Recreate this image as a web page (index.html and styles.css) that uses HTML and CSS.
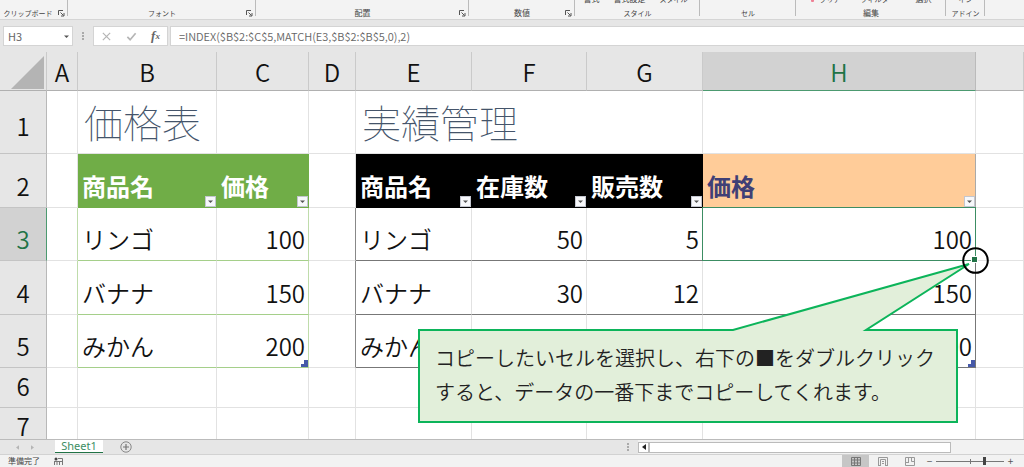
FILE: index.html
```html
<!DOCTYPE html>
<html lang="ja">
<head>
<meta charset="utf-8">
<meta name="viewport" content="width=device-width, initial-scale=1">
<title>Sheet1</title>
<link rel="stylesheet" href="styles.css">
</head>
<body>
<svg class="defs" aria-hidden="true">
  <symbol id="launch" viewBox="0 0 7 7"><path d="M.5 5V.5H5M2.5 2.5l3 3M6 3v3H3" fill="none" stroke="#555"/></symbol>
  <symbol id="down" viewBox="0 0 11 11"><path d="M3 4.500h5L5.500 7z" fill="#555"/></symbol>
</svg>

<header class="ribbon">
  <section class="group clipboard"><div class="label small">クリップボード</div><svg class="launch"><use href="#launch"/></svg></section>
  <section class="group font"><div class="label small">フォント</div><svg class="launch"><use href="#launch"/></svg></section>
  <section class="group align"><div class="label">配置</div><svg class="launch"><use href="#launch"/></svg></section>
  <section class="group number"><div class="label">数値</div><svg class="launch"><use href="#launch"/></svg></section>
  <section class="group style"><div class="commands"><span>書式</span><span>書式設定</span><span class="small">スタイル</span></div><div class="label small">スタイル</div></section>
  <section class="group cells"><div class="label small">セル</div></section>
  <section class="group edit"><div class="commands"><span class="clear small"><i></i>クリア</span><span class="small">フィルター</span><span>選択</span></div><div class="label">編集</div></section>
  <section class="group addin"><div class="commands"><span class="small">イン</span></div><div class="label small">アドイン</div></section>
</header>

<div class="formula-bar">
  <div class="name-box">
    <input class="name" aria-label="名前ボックス" value="H3">
    <svg class="name-arrow"><use href="#down"/></svg>
  </div>
  <span class="grip"></span>
  <div class="actions">
    <button aria-label="キャンセル"><svg viewBox="0 0 12 12"><path d="M2 2l8 8M10 2l-8 8" stroke="#b5b5b5" stroke-width="1.300"/></svg></button>
    <button aria-label="入力"><svg viewBox="0 0 12 12"><path d="M1.500 6.500l3 3 6-7" fill="none" stroke="#b5b5b5" stroke-width="1.800"/></svg></button>
    <button class="fx" aria-label="関数の挿入"><i>f</i><i class="sub">x</i></button>
  </div>
  <input class="formula" aria-label="数式" value="=INDEX($B$2:$C$5,MATCH(E3,$B$2:$B$5,0),2)">
</div>

<main class="sheet">
  <table class="grid">
    <colgroup><col class="c-row"><col class="c-a"><col class="c-b"><col class="c-c"><col class="c-d"><col class="c-e"><col class="c-f"><col class="c-g"><col class="c-h"><col></colgroup>
    <thead>
      <tr class="letters"><th class="corner"><svg viewBox="0 0 33 33"><path d="M33 0v33H0z" fill="#b4b4b4"/></svg></th><th>A</th><th>B</th><th>C</th><th>D</th><th>E</th><th>F</th><th>G</th><th class="active">H</th><th></th></tr>
    </thead>
    <tbody>
      <tr class="r1"><th>1</th><td></td><td class="title">価格表</td><td></td><td></td><td class="title" colspan="3">実績管理</td><td></td><td></td></tr>
      <tr class="r2"><th>2</th><td></td>
        <td class="head green">商品名<button class="filter" aria-label="商品名の絞り込み"><svg><use href="#down"/></svg></button></td>
        <td class="head green">価格<button class="filter" aria-label="価格の絞り込み"><svg><use href="#down"/></svg></button></td>
        <td></td>
        <td class="head black">商品名<button class="filter" aria-label="商品名の絞り込み"><svg><use href="#down"/></svg></button></td>
        <td class="head black">在庫数<button class="filter" aria-label="在庫数の絞り込み"><svg><use href="#down"/></svg></button></td>
        <td class="head black">販売数<button class="filter" aria-label="販売数の絞り込み"><svg><use href="#down"/></svg></button></td>
        <td class="head orange">価格<button class="filter" aria-label="価格の絞り込み"><svg><use href="#down"/></svg></button></td>
        <td></td></tr>
      <tr class="r3"><th class="active">3</th><td class="gl"></td><td class="g">リンゴ</td><td class="g num ge">100</td><td class="kl"></td><td class="k">リンゴ</td><td class="k num">50</td><td class="k num">5</td><td class="k num ke">100<span class="selection"></span></td><td></td></tr>
      <tr class="r4"><th>4</th><td class="gl"></td><td class="g">バナナ</td><td class="g num ge">150</td><td class="kl"></td><td class="k">バナナ</td><td class="k num">30</td><td class="k num">12</td><td class="k num ke">150</td><td></td></tr>
      <tr class="r5"><th>5</th><td class="gl"></td><td class="g">みかん</td><td class="g num ge">200<svg class="resize" viewBox="0 0 7 7"><path d="M3 0h4v7H0V4h3z"/></svg></td><td class="kl"></td><td class="k">みかん</td><td class="k num"></td><td class="k num"></td><td class="k num ke">200<svg class="resize" viewBox="0 0 7 7"><path d="M3 0h4v7H0V4h3z"/></svg></td><td></td></tr>
      <tr class="r6"><th>6</th><td></td><td></td><td></td><td></td><td></td><td></td><td></td><td></td><td></td></tr>
      <tr class="r6"><th>7</th><td></td><td></td><td></td><td></td><td></td><td></td><td></td><td></td><td></td></tr>
    </tbody>
  </table>
  <div class="callout">コピーしたいセルを選択し、右下の■をダブルクリック<br>すると、データの一番下までコピーしてくれます。</div>
  <svg class="pointer" viewBox="0 0 1000 387" aria-hidden="true">
    <path d="M733 280V278L969 212L866 278V280z" fill="#e2efda"/>
    <path d="M729 278H733L969 212L866 278H870" fill="none" stroke="#0cb45a" stroke-width="2"/>
    <circle cx="975.500" cy="208.500" r="12.300" fill="none" stroke="#000" stroke-width="2"/>
  </svg>
</main>

<nav class="tabs">
  <button class="nav-arrow" aria-label="前のシート"><svg viewBox="0 0 4 6"><path d="M4 0v6L0 3z"/></svg></button>
  <button class="nav-arrow" aria-label="次のシート"><svg viewBox="0 0 4 6"><path d="M0 0v6l4-3z"/></svg></button>
  <button class="tab">Sheet1</button>
  <button class="add" aria-label="新しいシート"><svg viewBox="0 0 12 12"><circle cx="6" cy="6" r="5.200" fill="none" stroke="#888"/><path d="M6 3v6M3 6h6" stroke="#777" stroke-width="1.200"/></svg></button>
  <span class="grip tab-grip"></span>
  <div class="scroll"><button class="scroll-left" aria-label="左へ"><svg viewBox="0 0 4 6"><path d="M4 0v6L0 3z"/></svg></button><span class="thumb"></span></div>
</nav>

<footer class="status">
  <span>準備完了</span>
  <svg class="macro" viewBox="0 0 9 8"><path d="M4 1.500h4.500V8M.5 4v4M3 4v4M5.500 4v4M1 4.500h7" stroke="#777" fill="none"/><circle cx="2" cy="2" r="1.500" fill="#444"/></svg>
  <div class="views">
    <button class="on" aria-label="標準"><svg viewBox="0 0 10 9"><path d="M.5.5h9v8h-9zM.5 3h9M.5 6h9M3.500.5v8M6.500.5v8" fill="none" stroke="#777"/></svg></button>
    <button aria-label="ページレイアウト"><svg viewBox="0 0 10 9"><path d="M.5 8.500V.5h9v8M2.500 8.500v-6h5v6M4 4.500h2M4 6.500h2M0 8.500h3M7 8.500h3" fill="none" stroke="#999"/></svg></button>
    <button aria-label="改ページプレビュー"><svg viewBox="0 0 10 9"><path d="M.5.5h9v8h-9zM.5 5.500H4M3.500.5v5M6.500.5v4h3" fill="none" stroke="#999"/></svg></button>
  </div>
  <div class="zoom">
    <button aria-label="縮小">−</button>
    <input type="range" min="0" max="100" value="73" aria-label="ズーム">
    <button aria-label="拡大">+</button>
  </div>
</footer>
</body>
</html>
```
FILE: styles.css
```css
* { box-sizing: border-box; }
body {
  margin: 0;
  height: 100vh;
  display: flex;
  flex-direction: column;
  overflow: hidden;
  background: #fff;
  color: #222;
  font-family: "Noto Sans CJK JP", sans-serif;
}
button, input { font: inherit; color: inherit; margin: 0; padding: 0; border: 0; background: none; border-radius: 0; }
button { display: flex; align-items: center; justify-content: center; }
svg { display: block; }
.defs { position: absolute; width: 0; height: 0; }

/* ribbon */
.ribbon { flex: none; display: flex; height: 20px; background: #f3f3f3; border-bottom: 1px solid #d5d5d5; font-size: 8px; line-height: 10px; color: #444; }
.group { flex: none; display: flex; flex-direction: column; justify-content: flex-end; position: relative; padding-bottom: 1px; overflow: hidden; }
.group::after { content: ""; position: absolute; right: 0; top: 0; height: 16px; border-right: 1px solid #bbb; }
.label { text-align: center; }
.small { font-size: 7px; }
.launch { position: absolute; right: 3px; bottom: 2px; width: 7px; height: 7px; }
.clipboard { width: 68px; }
.clipboard .label { padding-right: 12px; }
.font { width: 188px; }
.align { width: 213px; }
.number { width: 106px; }
.style { width: 125px; }
.cells { width: 96px; }
.edit { width: 150px; }
.addin { width: 39px; }
.commands { flex: 1; display: flex; align-items: flex-end; justify-content: center; gap: 14px; height: 4px; min-height: 0; overflow: hidden; margin-bottom: 4px; white-space: nowrap; }
.style .commands { padding-right: 4px; }
.edit .commands { gap: 20px; }
.clear i { display: inline-block; width: 3px; height: 3px; margin-right: 6px; background: #ee8095; border-radius: 1px; }

/* formula bar */
.formula-bar { flex: none; display: flex; align-items: center; height: 32px; padding: 0 0 0 3px; background: #e6e6e6; font-size: 11px; color: #666; }
.name-box { display: flex; align-items: center; width: 70px; height: 20px; padding-left: 4px; background: #fff; border: 1px solid #d4d4d4; }
.name { flex: 1; min-width: 0; height: 18px; }
.name-arrow { width: 11px; height: 11px; }
.grip { width: 2px; height: 8px; margin: 0 9px; background: repeating-linear-gradient(#aaa 0 2px, transparent 2px 3px); }
.actions { display: flex; justify-content: space-around; align-items: center; width: 75px; height: 20px; background: #fff; border: 1px solid #d4d4d4; }
.actions svg { width: 11px; height: 11px; }
.fx { font: bold 13px/16px "Liberation Serif", serif; }
.fx .sub { font-size: 9px; }
.formula { flex: 1; min-width: 0; height: 20px; margin-left: 2px; padding-left: 8px; background: #fff; border: 1px solid #d4d4d4; border-right: 0; font-weight: 350; }

/* sheet */
.sheet { flex: 1; min-height: 0; position: relative; overflow: hidden; }
.grid { width: 100%; table-layout: fixed; border-collapse: separate; border-spacing: 0; font-size: 24px; line-height: 36px; font-weight: 350; color: #111; }
.c-row { width: 47px; }
.c-a { width: 31px; }
.c-b { width: 139px; }
.c-c { width: 92px; }
.c-d { width: 47px; }
.c-e { width: 116px; }
.c-f { width: 115px; }
.c-g { width: 116px; }
.c-h { width: 273px; }
.grid th, .grid td { position: relative; padding: 0 4px 3px; vertical-align: bottom; white-space: nowrap; border-right: 1px solid #e2e2e2; border-bottom: 1px solid #e2e2e2; text-align: left; }
.grid th { padding: 0 0 3px; background: #e6e6e6; font-weight: 350; text-align: center; border-right-color: #b8b8b8; border-bottom-color: #c4c4c4; }
.grid .letters th { height: 39px; padding: 0; border-right-color: #cacaca; border-bottom-color: #b0b0b0; }
.letters svg { width: 33px; height: 33px; margin: 0 0 1px 11px; }
.grid th.active { background: #d2d2d2; color: #217346; border-right-color: #4c9a70; }
.grid .letters th.active { border-right-color: #bbb; border-bottom-color: #4c9a70; }
.r1 { height: 63px; }
.grid .r1 th { padding-bottom: 9px; }
.grid .title { padding: 0 6px 4px; font-size: 39px; line-height: 56px; font-weight: 100; color: #44546a; }
.r2 { height: 54px; }
.r3 { height: 53px; }
.r4 { height: 54px; }
.r5 { height: 53px; }
.r6 { height: 40px; }
.grid .head { font-weight: 700; color: #fff; }
.grid .green { background: #70ad47; border-color: #70ad47; }
.grid .black { background: #000; border-color: #000; }
.grid .orange { background: #ffcc99; border-right-color: #aaa; color: #3f3f76; }
.filter { position: absolute; right: 0; bottom: 0; width: 11px; height: 11px; background: #f7f8fb; border: 1px solid #c3c6cf; }
.filter svg { flex: none; width: 11px; height: 11px; }
.grid .num { text-align: right; padding-right: 3px; }
.grid .gl, .grid .ge { border-right-color: #bfdcab; }
.grid .g { border-bottom-color: #a5cf8a; }
.grid .kl { border-right-color: #888; }
.grid .k { border-bottom-color: #777; }
.grid .ke { border-right-color: #777; }
.selection { position: absolute; z-index: 1; inset: -1px; border: 1px solid #3c8d63; }
.selection::after { content: ""; position: absolute; right: -3px; bottom: -3px; width: 5px; height: 5px; background: #217346; border: 1px solid #fff; }
.resize { position: absolute; right: 0; bottom: 0; width: 7px; height: 7px; fill: #4659a9; }

/* annotation */
.callout { position: absolute; z-index: 2; left: 418px; top: 277px; width: 540px; padding: 10px 15px 12px; background: #e2efda; border: 2px solid #0cb45a; font-size: 20px; line-height: 34px; font-weight: 350; white-space: nowrap; }
.pointer { position: absolute; z-index: 3; left: 0; top: 0; width: 1000px; height: 387px; pointer-events: none; }

/* sheet tabs */
.tabs { flex: none; display: flex; align-items: center; height: 16px; background: #e6e6e6; border-top: 1px solid #bbb; border-bottom: 1px solid #d2d2d2; padding-left: 15px; }
.nav-arrow { width: 4px; margin-right: 11px; }
.nav-arrow svg { width: 3px; height: 5px; fill: #b5b5b5; }
.tab { align-self: flex-start; width: 48px; height: 13px; margin-left: 10px; background: #fff; border-bottom: 1px solid #217346; color: #3c8d63; font: 11px/12px "Noto Sans", sans-serif; }
.add { margin-left: 17px; }
.add svg { width: 12px; height: 12px; }
.tab-grip { margin-left: auto; }
.scroll { width: 386px; height: 14px; display: flex; align-items: center; background: #f2f2f2; }
.scroll-left { width: 11px; height: 11px; background: #fff; border: 1px solid #bbb; }
.scroll-left svg { width: 4px; height: 6px; fill: #222; }
.thumb { width: 302px; height: 11px; background: #fff; border: 1px solid #bbb; }

/* status bar */
.status { flex: none; display: flex; align-items: center; height: 12px; padding-left: 8px; overflow: hidden; background: #f2f2f2; font-size: 8px; line-height: 12px; color: #444; }
.macro { width: 9px; height: 8px; margin-left: 14px; }
.views { display: flex; margin-left: auto; }
.views button { width: 27px; height: 12px; }
.views .on { background: #c6c6c6; }
.views svg { width: 10px; height: 9px; }
.zoom { display: flex; align-items: center; gap: 3px; width: 101px; padding-left: 3px; font-size: 10px; color: #555; }
.zoom button { width: 7px; height: 12px; }
.zoom input { appearance: none; width: 68px; height: 10px; background: linear-gradient(#777, #777) 34px 50% / 1px 5px no-repeat, linear-gradient(#777, #777) 0 50% / 100% 1px no-repeat; }
.zoom input::-webkit-slider-thumb { appearance: none; width: 3px; height: 8px; background: #444; }
```
